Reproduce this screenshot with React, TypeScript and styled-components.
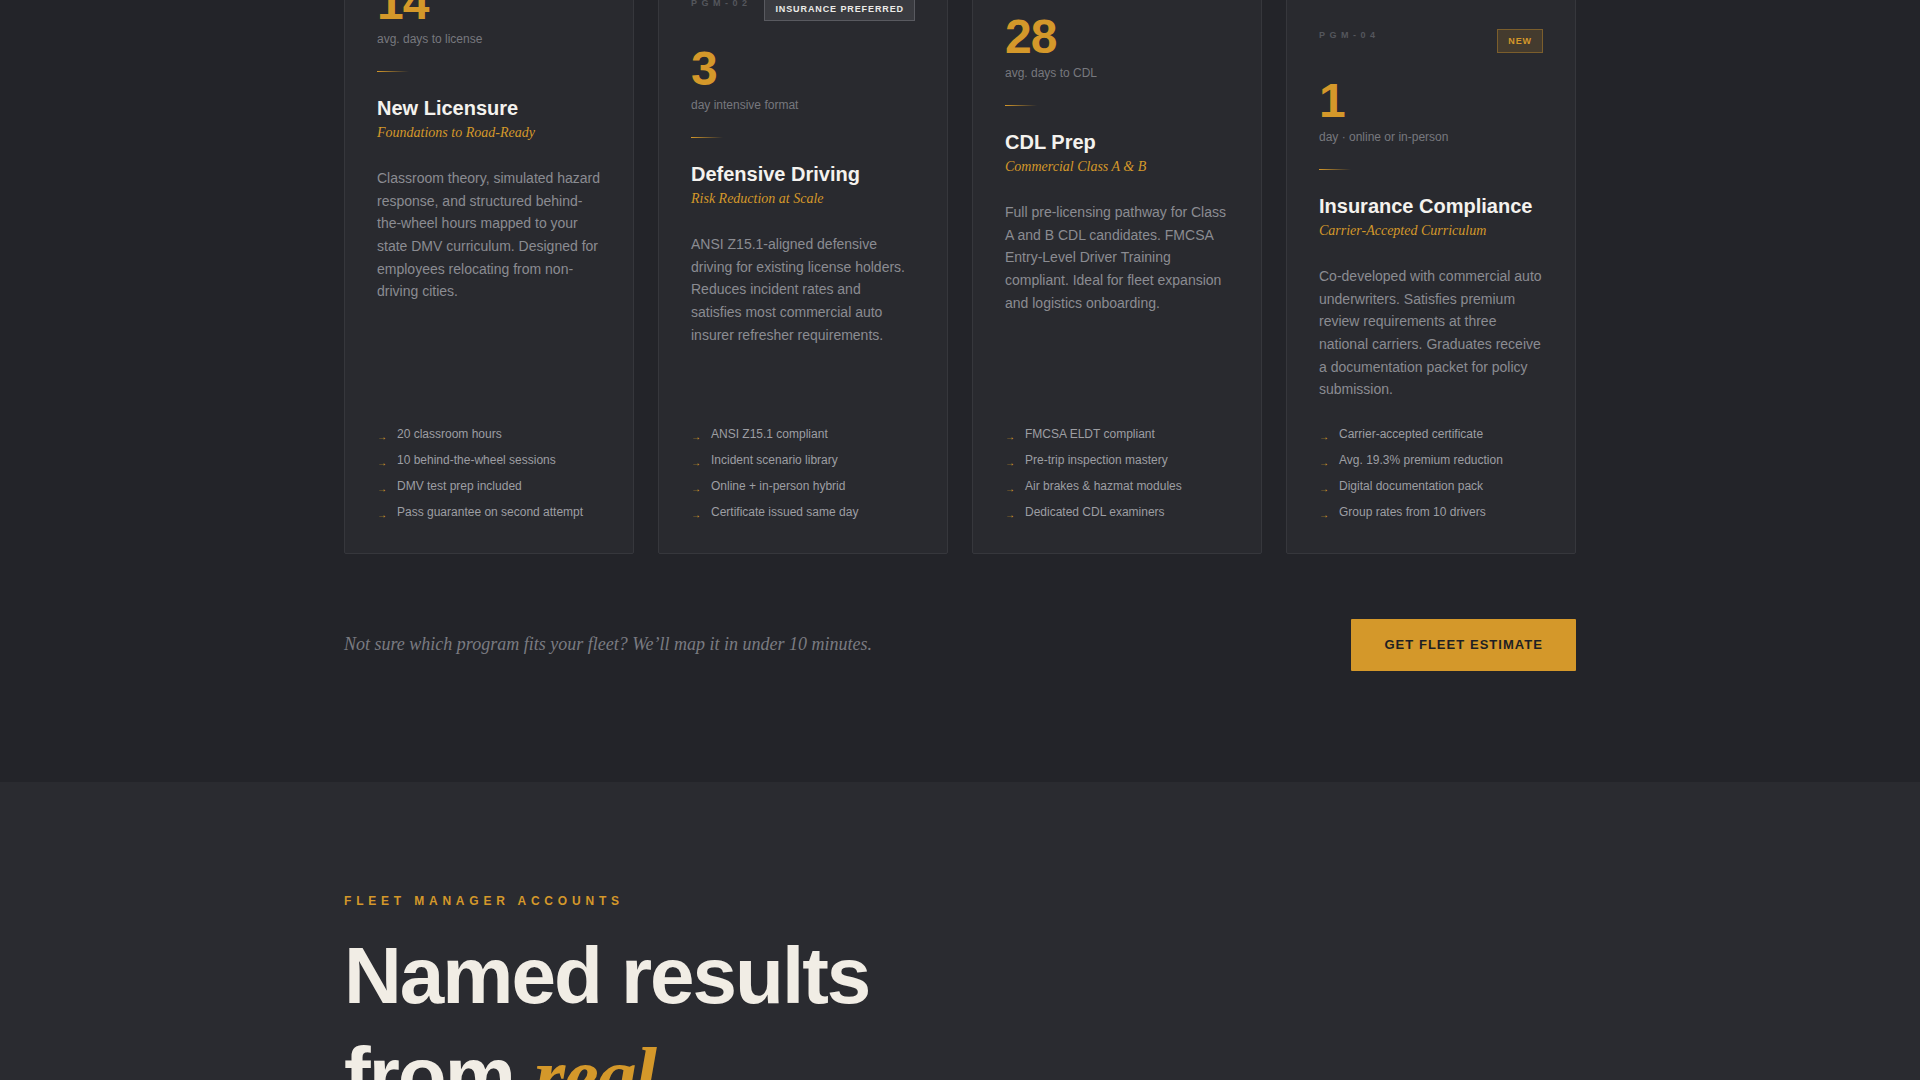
import React from "react";
import styled, { createGlobalStyle } from "styled-components";

const GOLD = "#d4982a";

const GlobalStyle = createGlobalStyle`
  * { box-sizing: border-box; }
  html, body { margin: 0; padding: 0; background: #232429; }
  body {
    font-family: "Liberation Sans", Arial, sans-serif;
    color: #f2f0eb;
    -webkit-font-smoothing: antialiased;
  }
`;

const ProgramsSection = styled.section`
  background: #232429;
  padding: 0 0 111px;
  overflow: hidden;
`;

const Container = styled.div`
  width: 1232px;
  margin: 0 auto;
`;

/* the capture is scrolled part-way into this section, so the card row starts above the fold */
const CardGrid = styled.div`
  display: grid;
  grid-template-columns: repeat(4, 1fr);
  gap: 24px;
  align-items: stretch;
  margin-top: -102px;
`;

const Card = styled.article<{ $drop: number }>`
  margin-top: ${(p) => p.$drop}px;
  display: flex;
  flex-direction: column;
  background: #292a2f;
  border: 1px solid #36373c;
  border-radius: 2px;
  padding: 32px;
`;

const CardHeader = styled.div`
  display: flex;
  justify-content: space-between;
  align-items: flex-start;
  min-height: 24px;
`;

const Code = styled.span`
  font-size: 9px;
  line-height: 12px;
  font-weight: 700;
  letter-spacing: 0.5em;
  color: #54565c;
`;

const Badge = styled.span<{ $tone: "neutral" | "gold" }>`
  display: inline-block;
  font-size: 9px;
  line-height: 12px;
  font-weight: 700;
  letter-spacing: 0.1em;
  text-transform: uppercase;
  padding: 5px 10px;
  border: 1px solid ${(p) => (p.$tone === "gold" ? "rgba(212,152,42,0.38)" : "#595a60")};
  background: ${(p) => (p.$tone === "gold" ? "rgba(212,152,42,0.16)" : "#3a3b40")};
  color: ${(p) => (p.$tone === "gold" ? GOLD : "#ecebe8")};
`;

const StatValue = styled.div`
  margin-top: 24px;
  font-size: 48px;
  line-height: 1;
  font-weight: 700;
  letter-spacing: -0.02em;
  color: ${GOLD};
`;

const StatLabel = styled.div`
  margin-top: 3px;
  font-size: 12px;
  line-height: 18px;
  color: #77787e;
`;

const Divider = styled.div`
  width: 32px;
  height: 1px;
  margin: 23px 0;
  background: linear-gradient(90deg, ${GOLD}, rgba(212, 152, 42, 0));
`;

const Title = styled.h3`
  margin: 0;
  font-size: 20px;
  line-height: 26px;
  font-weight: 700;
  color: #f4f2ee;
`;

const Subtitle = styled.div`
  margin-top: 2px;
  font-family: "Liberation Serif", "Times New Roman", serif;
  font-style: italic;
  font-size: 14px;
  line-height: 20px;
  color: ${GOLD};
`;

const Description = styled.p`
  margin: 24px 0;
  font-size: 14px;
  line-height: 1.62;
  color: #8b8c92;
`;

const FeatureList = styled.ul`
  list-style: none;
  margin: auto 0 0;
  padding: 0;
  display: flex;
  flex-direction: column;
  gap: 8px;
`;

const Feature = styled.li`
  display: flex;
  align-items: flex-start;
  gap: 10px;
  font-size: 12px;
  line-height: 18px;
  color: #9d9ea3;
`;

const Arrow = styled.span`
  flex: none;
  width: 10px;
  padding-top: 6px;
  font-size: 10px;
  line-height: 12px;
  color: ${GOLD};
`;

const CtaRow = styled.div`
  margin-top: 65px;
  display: flex;
  justify-content: space-between;
  align-items: center;
`;

const CtaText = styled.p`
  margin: 0;
  font-family: "Liberation Serif", "Times New Roman", serif;
  font-style: italic;
  font-size: 18px;
  line-height: 1.4;
  color: #7a7b81;
`;

const CtaButton = styled.button`
  border: none;
  border-radius: 1px;
  background: ${GOLD};
  color: #1e1f23;
  padding: 18px 33px;
  font-family: "Liberation Sans", Arial, sans-serif;
  font-size: 13px;
  line-height: 16px;
  font-weight: 700;
  letter-spacing: 0.08em;
  text-transform: uppercase;
  cursor: pointer;
`;

const AccountsSection = styled.section`
  background: #2a2b30;
  padding: 110px 0 120px;
`;

const Eyebrow = styled.p`
  margin: 0;
  font-size: 12px;
  line-height: 18px;
  font-weight: 700;
  letter-spacing: 0.4em;
  text-transform: uppercase;
  color: ${GOLD};
`;

const Heading = styled.h2`
  margin: 16px 0 0;
  max-width: 600px;
  font-size: 80px;
  line-height: 100px;
  font-weight: 700;
  letter-spacing: -0.025em;
  color: #f1ede5;
`;

const Accent = styled.em`
  font-family: "Liberation Serif", "Times New Roman", serif;
  font-style: italic;
  font-weight: 700;
  color: ${GOLD};
`;

type Program = {
  code: string;
  badge?: { text: string; tone: "neutral" | "gold" };
  drop: number;
  stat: string;
  statLabel: string;
  title: string;
  subtitle: string;
  description: string;
  features: string[];
};

const programs: Program[] = [
  {
    code: "PGM-01",
    drop: 0,
    stat: "14",
    statLabel: "avg. days to license",
    title: "New Licensure",
    subtitle: "Foundations to Road-Ready",
    description:
      "Classroom theory, simulated hazard response, and structured behind-the-wheel hours mapped to your state DMV curriculum. Designed for employees relocating from non-driving cities.",
    features: [
      "20 classroom hours",
      "10 behind-the-wheel sessions",
      "DMV test prep included",
      "Pass guarantee on second attempt",
    ],
  },
  {
    code: "PGM-02",
    badge: { text: "Insurance Preferred", tone: "neutral" },
    drop: 66,
    stat: "3",
    statLabel: "day intensive format",
    title: "Defensive Driving",
    subtitle: "Risk Reduction at Scale",
    description:
      "ANSI Z15.1-aligned defensive driving for existing license holders. Reduces incident rates and satisfies most commercial auto insurer refresher requirements.",
    features: [
      "ANSI Z15.1 compliant",
      "Incident scenario library",
      "Online + in-person hybrid",
      "Certificate issued same day",
    ],
  },
  {
    code: "PGM-03",
    drop: 34,
    stat: "28",
    statLabel: "avg. days to CDL",
    title: "CDL Prep",
    subtitle: "Commercial Class A & B",
    description:
      "Full pre-licensing pathway for Class A and B CDL candidates. FMCSA Entry-Level Driver Training compliant. Ideal for fleet expansion and logistics onboarding.",
    features: [
      "FMCSA ELDT compliant",
      "Pre-trip inspection mastery",
      "Air brakes & hazmat modules",
      "Dedicated CDL examiners",
    ],
  },
  {
    code: "PGM-04",
    badge: { text: "New", tone: "gold" },
    drop: 98,
    stat: "1",
    statLabel: "day · online or in-person",
    title: "Insurance Compliance",
    subtitle: "Carrier-Accepted Curriculum",
    description:
      "Co-developed with commercial auto underwriters. Satisfies premium review requirements at three national carriers. Graduates receive a documentation packet for policy submission.",
    features: [
      "Carrier-accepted certificate",
      "Avg. 19.3% premium reduction",
      "Digital documentation pack",
      "Group rates from 10 drivers",
    ],
  },
];

function ProgramCard({ p }: { p: Program }) {
  return (
    <Card $drop={p.drop}>
      <CardHeader>
        <Code>{p.code}</Code>
        {p.badge && <Badge $tone={p.badge.tone}>{p.badge.text}</Badge>}
      </CardHeader>
      <StatValue>{p.stat}</StatValue>
      <StatLabel>{p.statLabel}</StatLabel>
      <Divider />
      <Title>{p.title}</Title>
      <Subtitle>{p.subtitle}</Subtitle>
      <Description>{p.description}</Description>
      <FeatureList>
        {p.features.map((f) => (
          <Feature key={f}>
            <Arrow>→</Arrow>
            <span>{f}</span>
          </Feature>
        ))}
      </FeatureList>
    </Card>
  );
}

export default function App() {
  return (
    <>
      <GlobalStyle />
      <ProgramsSection>
        <Container>
          <CardGrid>
            {programs.map((p) => (
              <ProgramCard key={p.code} p={p} />
            ))}
          </CardGrid>
          <CtaRow>
            <CtaText>Not sure which program fits your fleet? We’ll map it in under 10 minutes.</CtaText>
            <CtaButton>Get Fleet Estimate</CtaButton>
          </CtaRow>
        </Container>
      </ProgramsSection>
      <AccountsSection>
        <Container>
          <Eyebrow>Fleet Manager Accounts</Eyebrow>
          <Heading>
            Named results from <Accent>real</Accent> operators.
          </Heading>
        </Container>
      </AccountsSection>
    </>
  );
}
